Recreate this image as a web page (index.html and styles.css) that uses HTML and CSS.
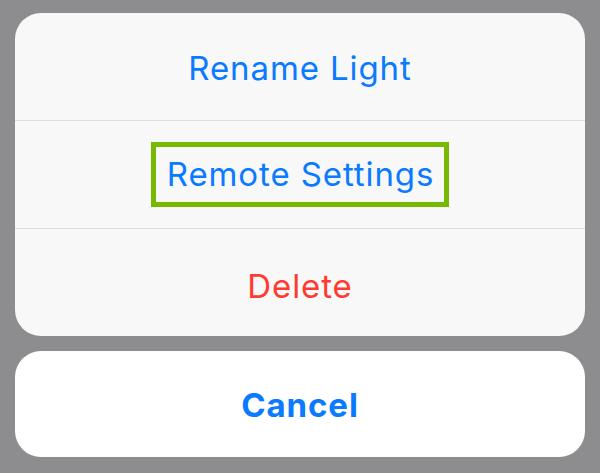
FILE: index.html
```html
<!DOCTYPE html>
<html lang="en">
<head>
<meta charset="utf-8">
<title>Action Sheet</title>
<link rel="stylesheet" href="styles.css">
</head>
<body>
<div class="sheet">
  <div class="group">
    <div class="row action">Rename Light</div>
    <div class="row action"><span class="highlight">Remote Settings</span></div>
    <div class="row destructive">Delete</div>
  </div>
  <div class="group cancel-group">
    <div class="row cancel">Cancel</div>
  </div>
</div>
</body>
</html>
```

FILE: styles.css
```css
html, body {
  margin: 0;
  padding: 0;
}
body {
  background: #8d8d8f;
  width: 600px;
  height: 473px;
  font-family: Inter, "Noto Sans", "Liberation Sans", sans-serif;
  overflow: hidden;
}
.sheet {
  padding: 13px 15px 0 15px;
  display: flex;
  flex-direction: column;
  gap: 15px;
}
.group {
  background: #f8f8f8;
  border-radius: 26px;
  overflow: hidden;
  display: flex;
  flex-direction: column;
}
.row {
  height: 107px;
  display: flex;
  align-items: center;
  justify-content: center;
  font-size: 33px;
  letter-spacing: 0.9px;
  color: #0a7aff;
  padding-top: 3px;
  box-sizing: border-box;
}
.row + .row {
  border-top: 1px solid #dedede;
  height: 108px;
}
.destructive {
  color: #ff3b30;
  padding-top: 6px;
}
.highlight {
  display: inline-block;
  border: 5px solid #76b900;
  padding: 0 10px 0 11px;
  height: 55px;
  line-height: 55px;
  margin-top: -3px;
}
.cancel-group {
  background: #ffffff;
}
.cancel {
  height: 106px;
  font-weight: 700;
  padding-top: 2px;
}
```
